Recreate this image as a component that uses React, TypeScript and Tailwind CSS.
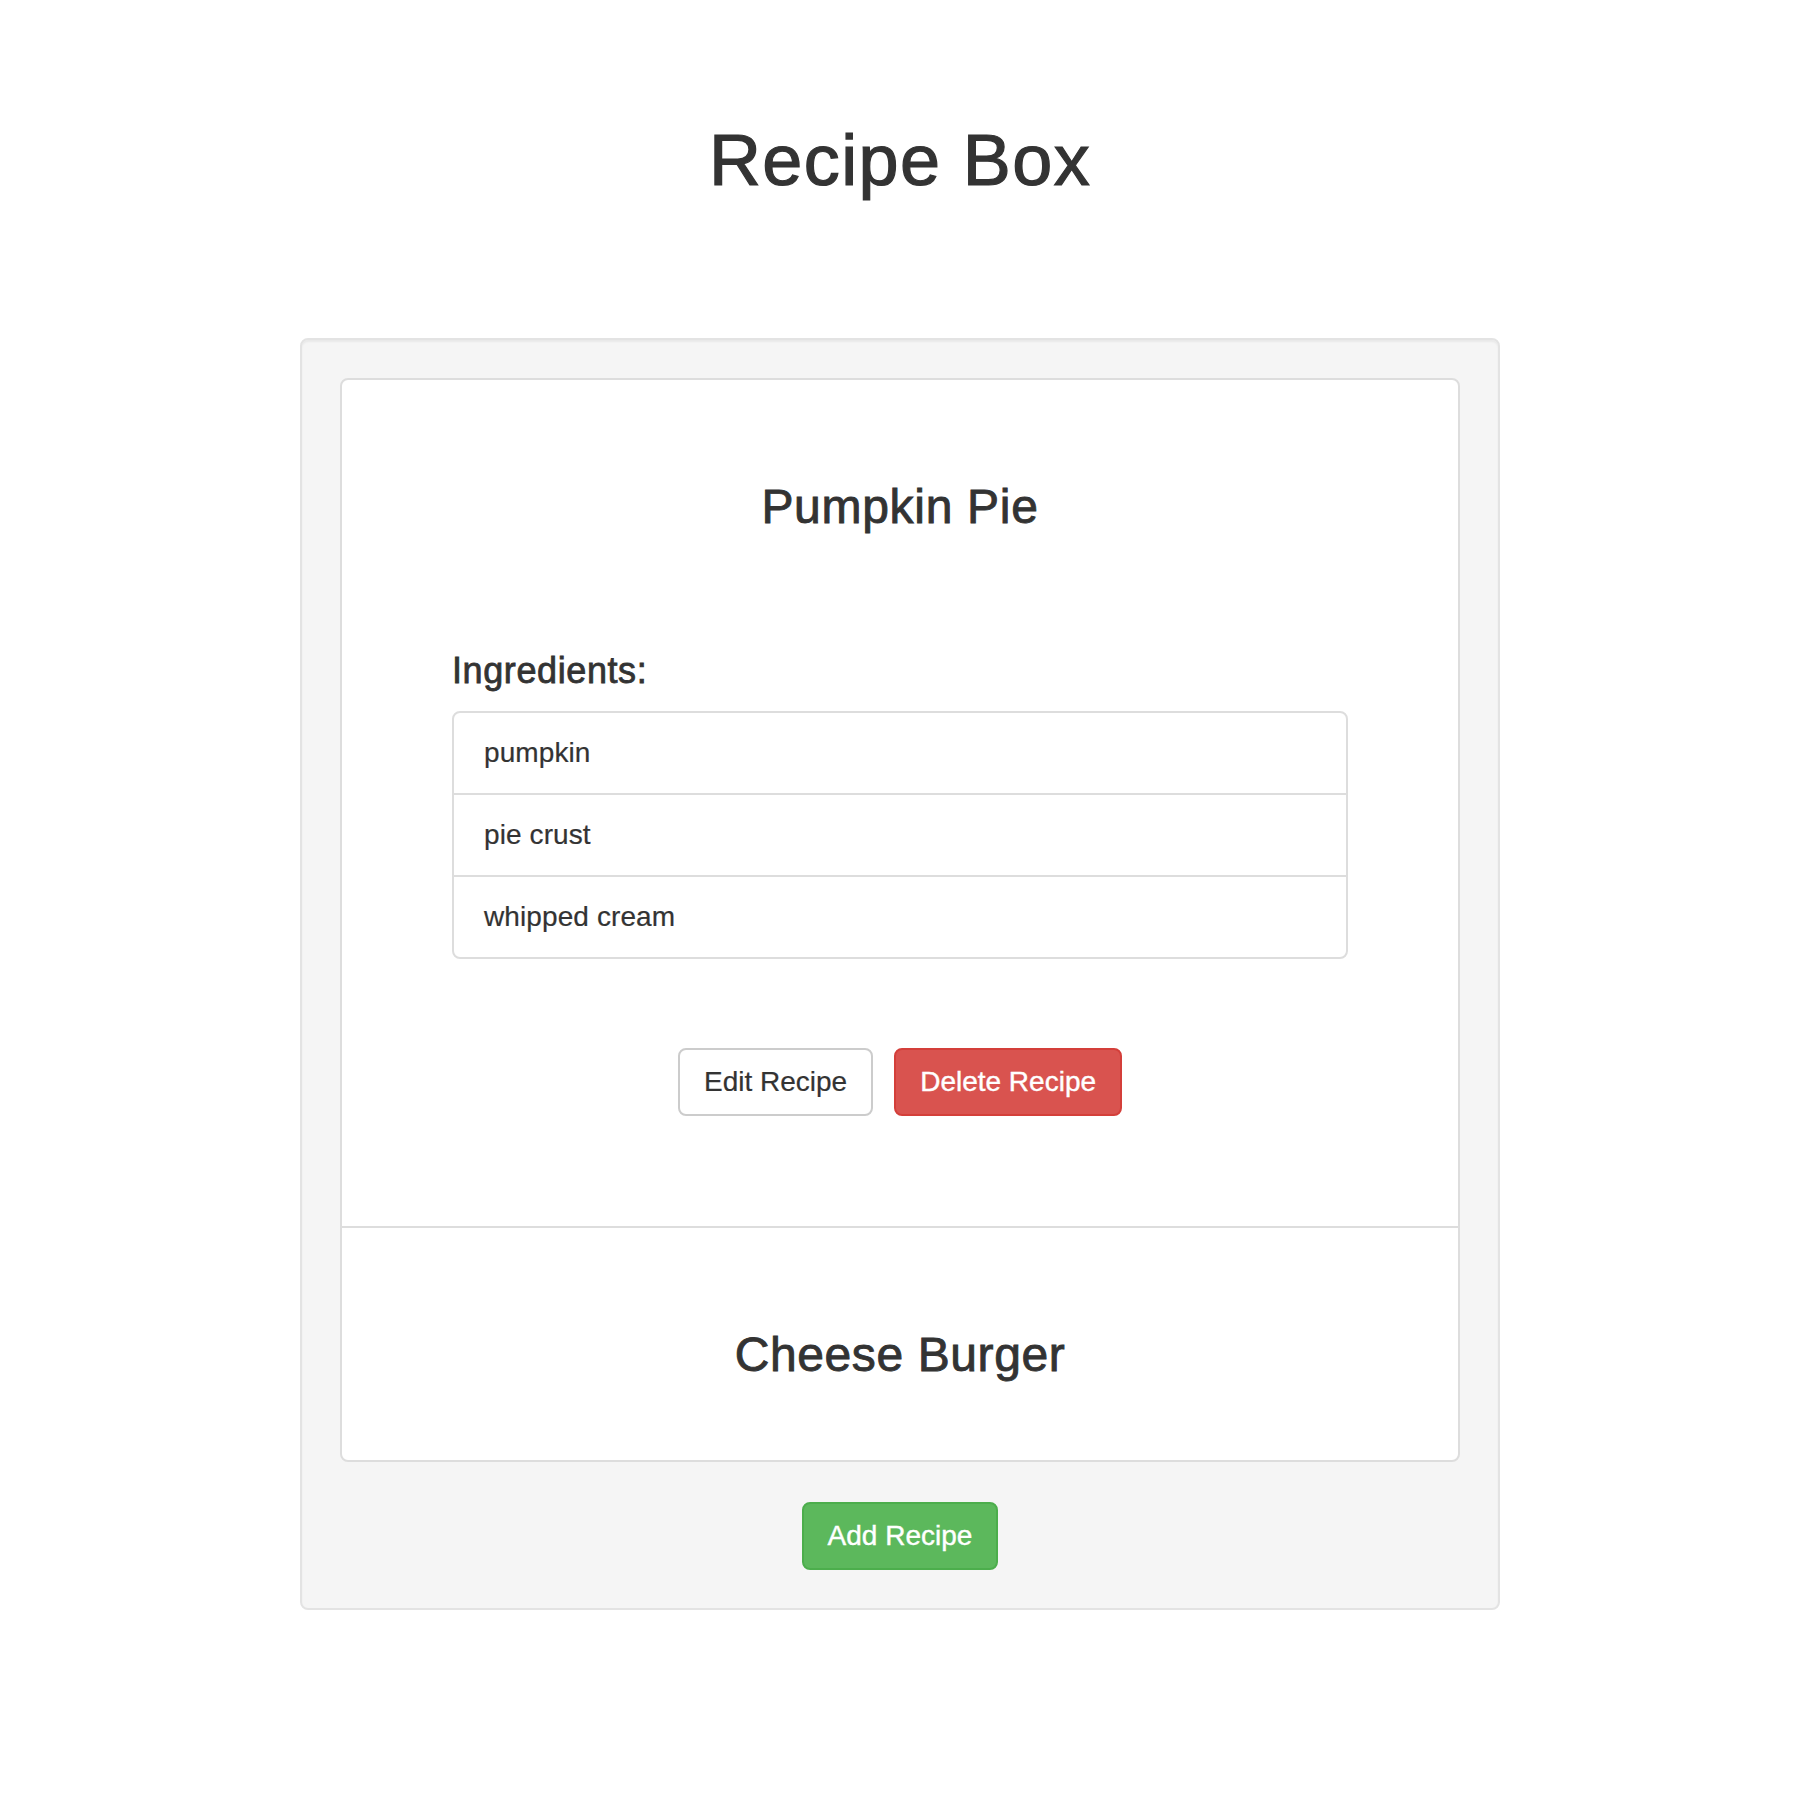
import React from "react";

const ingredients = ["pumpkin", "pie crust", "whipped cream"];

export default function App() {
  return (
    <div className="min-h-[1800px] bg-white font-['Liberation_Sans','Helvetica_Neue',Arial,sans-serif] text-[#333]">
      <h1 className="pt-[121px] text-center text-[72px] leading-[79px] font-normal tracking-[1.4px] [-webkit-text-stroke:1.2px_#333]">
        Recipe Box
      </h1>
      <div className="mx-auto mt-[138px] w-[1200px] rounded-[8px] border-2 border-[#e3e3e3] bg-[#f5f5f5] p-[38px] shadow-[inset_0_2px_2px_rgba(0,0,0,0.05)]">
        <div className="rounded-[8px] border-2 border-[#ddd] bg-white">
          <section>
            <h3 className="pt-[100px] text-center text-[48px] leading-[53px] tracking-[0.7px] [-webkit-text-stroke:0.9px_#333]">
              Pumpkin Pie
            </h3>
            <div className="px-[110px] pt-[118px]">
              <h4 className="text-[36px] leading-[40px] tracking-[0.6px] [-webkit-text-stroke:0.8px_#333]">Ingredients:</h4>
              <ul className="mt-[20px] divide-y-2 divide-[#ddd] rounded-[8px] border-2 border-[#ddd]">
                {ingredients.map((item) => (
                  <li key={item} className="px-[30px] py-[20px] text-[28px] leading-[40px] tracking-[0.1px] [-webkit-text-stroke:0.2px_#333]">
                    {item}
                  </li>
                ))}
              </ul>
            </div>
            <div className="flex justify-center gap-[21px] pt-[89px] pb-[110px]">
              <button className="h-[68px] rounded-[8px] border-2 border-[#ccc] bg-white px-[24px] text-[28px] leading-[40px] text-[#333] [-webkit-text-stroke:0.2px_#333]">
                Edit Recipe
              </button>
              <button className="h-[68px] rounded-[8px] border-2 border-[#d43f3a] bg-[#d9534f] px-[24px] text-[28px] leading-[40px] text-white [-webkit-text-stroke:0.4px_#fff]">
                Delete Recipe
              </button>
            </div>
          </section>
          <section className="border-t-2 border-[#ddd]">
            <h3 className="pt-[100px] pb-[79px] text-center text-[48px] leading-[53px] tracking-[0.6px] [-webkit-text-stroke:0.9px_#333]">
              Cheese Burger
            </h3>
          </section>
        </div>
        <div className="mt-[40px] flex justify-center">
          <button className="h-[68px] rounded-[8px] border-2 border-[#4cae4c] bg-[#5cb85c] px-[24px] text-[28px] leading-[40px] text-white [-webkit-text-stroke:0.4px_#fff]">
            Add Recipe
          </button>
        </div>
      </div>
    </div>
  );
}
